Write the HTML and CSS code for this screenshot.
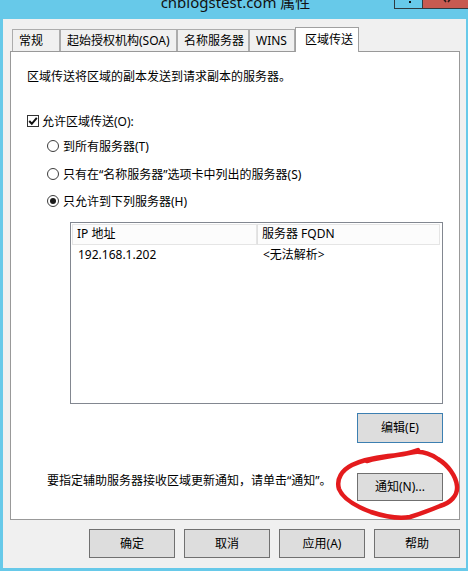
FILE: index.html
```html
<!DOCTYPE html>
<html lang="zh-CN">
<head>
<meta charset="utf-8">
<title>cnblogstest.com 属性</title>
<link rel="stylesheet" href="styles.css">
</head>
<body>
<div class="window">
  <div class="titlebar">
    <div class="tb-side"></div>
    <div class="title">cnblogstest.com 属性</div>
    <div class="tb-side controls">
      <span class="ctl min"><i class="dot"></i></span>
      <span class="ctl close">
        <svg class="xglyph" width="12" height="4" viewBox="0 0 12 4"><path d="M1 -3 L5 2 M11 -3 L7 2" stroke="#2a1a1a" stroke-width="1.6" fill="none"/></svg>
      </span>
    </div>
  </div>
  <div class="client">
    <div class="tabs">
      <div class="tab t1">常规</div>
      <div class="tab t2">起始授权机构(SOA)</div>
      <div class="tab t3">名称服务器</div>
      <div class="tab t4">WINS</div>
      <div class="tab active t5">区域传送</div>
    </div>
    <div class="panel">
      <div class="desc">区域传送将区域的副本发送到请求副本的服务器。</div>
      <div class="checkrow">
        <span class="checkbox"><svg width="10" height="10" viewBox="0 0 10 10"><path d="M1.2 5 L3.8 7.8 L8.8 1.8" stroke="#111" stroke-width="2" fill="none"/></svg></span>
        <span>允许区域传送(O):</span>
      </div>
      <div class="radios">
        <div class="radiorow r1"><span class="radio"></span><span>到所有服务器(T)</span></div>
        <div class="radiorow r2"><span class="radio"></span><span>只有在“名称服务器”选项卡中列出的服务器(S)</span></div>
        <div class="radiorow r3"><span class="radio on"><i></i></span><span>只允许到下列服务器(H)</span></div>
      </div>
      <div class="list">
        <div class="lhead">
          <div class="hcell c1">IP 地址</div>
          <div class="hcell c2">服务器 FQDN</div>
        </div>
        <div class="lrow">
          <div class="cell c1">192.168.1.202</div>
          <div class="cell c2">&lt;无法解析&gt;</div>
        </div>
      </div>
      <div class="editrow"><button class="btn edit">编辑(E)</button></div>
      <div class="noterow">
        <span class="note">要指定辅助服务器接收区域更新通知，请单击“通知”。</span>
        <button class="btn notify">通知(N)...</button>
      </div>
    </div>
    <div class="buttons">
      <button class="btn dlg">确定</button>
      <button class="btn dlg">取消</button>
      <button class="btn dlg">应用(A)</button>
      <button class="btn dlg">帮助</button>
    </div>
  </div>
</div>
<svg class="annot" width="468" height="571" viewBox="0 0 468 571">
  <path d="M367 461 C380 457 400 455 415 452 C425 451 432 455 438 459 C448 465 456 476 457 486 C458 496 450 503 440 506 C428 511 420 514 410 517 C398 519 383 516 371 512 C355 506 343 499 339 489 C336 479 342 470 352 465 C362 460 372 458 388 456 C400 455 410 453 418 450" stroke="#e41b1d" stroke-width="4.5" fill="none" stroke-linecap="round" stroke-linejoin="round"/>
</svg>
</body>
</html>
```

FILE: styles.css
```css
* { box-sizing: border-box; }
html, body { margin: 0; padding: 0; }
body {
  width: 468px;
  height: 571px;
  overflow: hidden;
  background: #67c9e9;
  font-family: "Noto Sans", "Noto Sans CJK SC", sans-serif;
  font-size: 12px;
  color: #000;
  position: relative;
}
.window {
  width: 468px;
  height: 571px;
  padding: 0 2px 3px 3px;
  display: flex;
  flex-direction: column;
}
.titlebar {
  height: 19px;
  margin-right: -2px;
  display: grid;
  grid-template-columns: 1fr auto 1fr;
  overflow: hidden;
}
.title {
  font-size: 15px;
  line-height: 20px;
  margin-top: -8px;
  color: #111;
  white-space: nowrap;
}
.controls {
  display: flex;
  justify-content: flex-end;
  align-items: flex-start;
}
.ctl {
  display: flex;
  justify-content: center;
  height: 9px;
  border: 1px solid #2f3b40;
  border-top: 0;
}
.min { width: 28px; background: #67c9e9; border-right: 0; margin-right: 0; }
.min .dot { width: 2px; height: 2px; background: #111; margin-top: 1px; margin-left: 3px; }
.close { width: 46px; background: #c75a50; border-right: 0; }
.xglyph { display: block; margin-left: 2px; }
.client {
  flex: 1;
  background: #f0f0f0;
  padding: 8px 6px 0 7px;
  display: flex;
  flex-direction: column;
}
.tabs {
  display: flex;
  align-items: flex-end;
  height: 24px;
  margin-left: 2px;
  position: relative;
  z-index: 2;
}
.tab {
  height: 22px;
  border: 1px solid #acacac;
  border-bottom: 0;
  background: #f0f0f0;
  padding: 3px 0 0 6px;
  line-height: 16px;
  white-space: nowrap;
}
.tab + .tab { margin-left: 0; }
.t1 { width: 48px; }
.t2 { width: 117px; }
.t3 { width: 72px; }
.t4 { width: 46px; }
.t5 { width: 64px; }
.tab.active {
  height: 25px;
  margin-bottom: -1px;
  background: #fff;
  padding: 4px 0 0 9px;
  border-color: #a0a0a0;
}
.panel {
  width: 450px;
  height: 469px;
  border: 1px solid #999;
  background: #fff;
  padding: 17px 16px 0 16px;
  display: flex;
  flex-direction: column;
}
.desc { line-height: 16px; }
.checkrow {
  margin-top: 28px;
  display: flex;
  align-items: center;
  height: 16px;
  gap: 3px;
}
.checkbox {
  width: 12px;
  height: 12px;
  border: 1px solid #333;
  background: #fff;
  display: flex;
  align-items: center;
  justify-content: center;
}
.checkbox svg { display: block; }
.radios { margin-left: 20px; display: flex; flex-direction: column; }
.radiorow {
  display: flex;
  align-items: center;
  height: 16px;
  gap: 4px;
}
.r1 { margin-top: 9px; }
.r2 { margin-top: 12px; }
.r3 { margin-top: 11px; }
.radio {
  width: 12px;
  height: 12px;
  border: 1px solid #3c3c3c;
  border-radius: 50%;
  background: #fff;
  display: flex;
  align-items: center;
  justify-content: center;
}
.radio.on i {
  width: 6px;
  height: 6px;
  border-radius: 50%;
  background: #1a1a1a;
}
.list {
  margin-top: 13px;
  margin-left: 43px;
  height: 182px;
  border: 1px solid #828790;
  padding: 1px 2px 0 1px;
  background: #fff;
}
.lhead {
  display: flex;
  height: 21px;
}
.hcell {
  border: 1px solid #e5e5e5;
  background: #fcfcfc;
  line-height: 18px;
  padding-left: 4px;
  white-space: nowrap;
}
.hcell.c1 { width: 185px; }
.hcell.c2 { flex: 1; border-left: 1px solid #e0e0e0; }
.lrow { display: flex; height: 20px; line-height: 20px; }
.cell.c1 { width: 185px; padding-left: 6px; }
.cell.c2 { padding-left: 6px; }
.btn {
  font-family: inherit;
  font-size: 12px;
  color: #000;
  background: #dddddd;
  border: 1px solid #707070;
  border-radius: 0;
  padding: 0;
  margin: 0;
  line-height: 16px;
}
.editrow {
  margin-top: 9px;
  display: flex;
  justify-content: flex-end;
}
.edit {
  width: 86px;
  height: 30px;
  border-color: #3c7fb1;
}
.noterow {
  margin-top: 30px;
  display: flex;
  justify-content: space-between;
  align-items: flex-start;
}
.note { margin-left: 20px; line-height: 16px; white-space: nowrap; }
.notify { width: 86px; height: 28px; }
.buttons {
  margin-top: 9px;
  display: flex;
  justify-content: flex-end;
  gap: 9px;
}
.dlg { width: 86px; height: 29px; }
.annot {
  position: absolute;
  left: 0;
  top: 0;
  pointer-events: none;
}
```
